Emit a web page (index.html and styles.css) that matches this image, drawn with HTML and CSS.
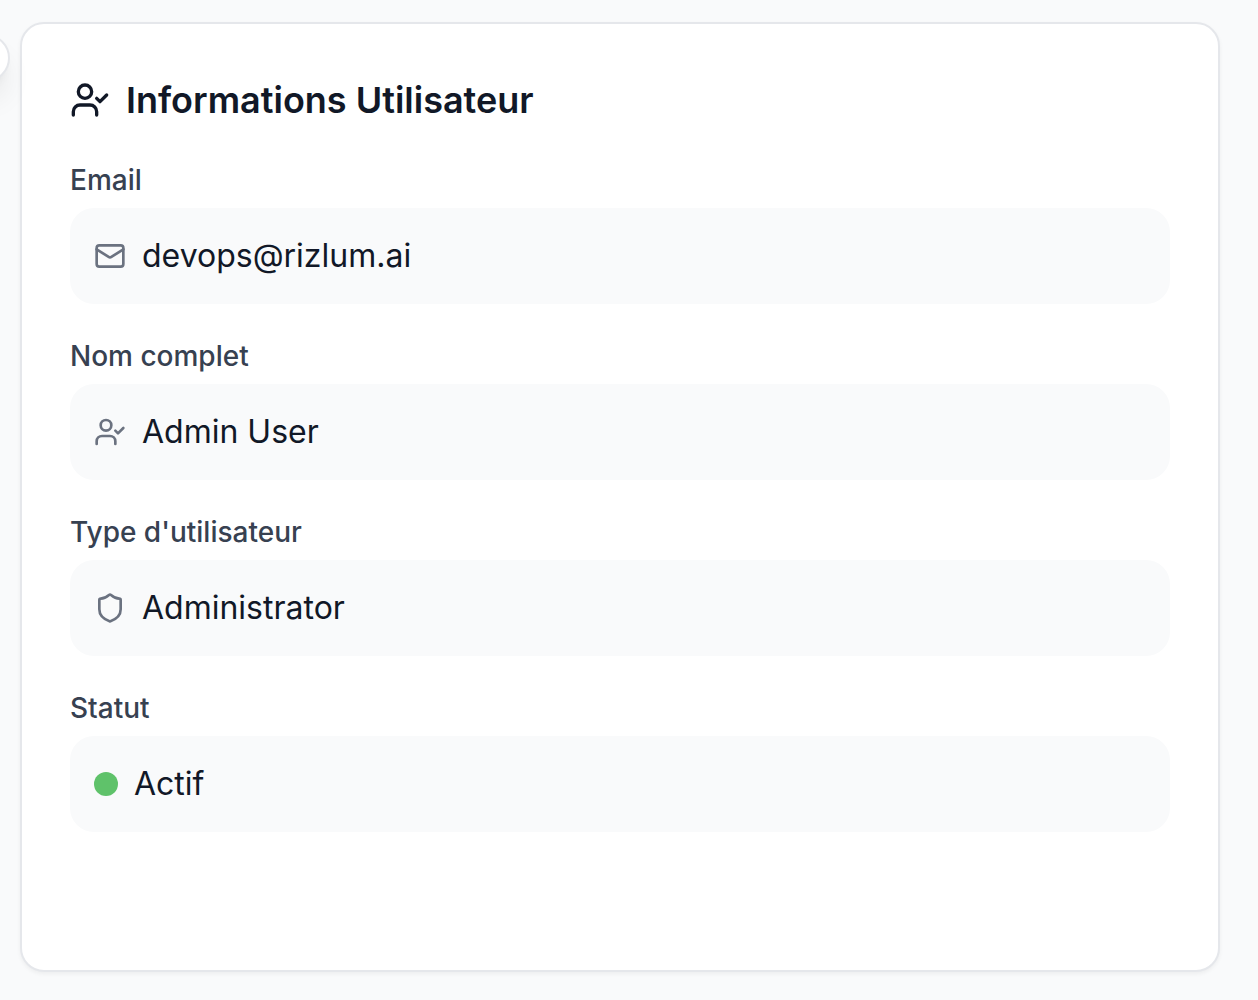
FILE: index.html
```
<!DOCTYPE html>
<html lang="fr">
<head>
    <meta charset="UTF-8">
    <meta name="viewport" content="width=device-width, initial-scale=1.0">
    <title>Informations Utilisateur</title>
    <link rel="stylesheet" href="styles.css">
</head>
<body>
    <button type="button" class="sidebar-toggle" aria-label="Menu"></button>

    <main class="page">
        <section class="card">
            <h2 class="card-title">
                <svg class="icon icon-lg" viewBox="0 0 24 24" aria-hidden="true">
                    <path d="m16 11 2 2 4-4"/>
                    <path d="M16 21v-2a4 4 0 0 0-4-4H6a4 4 0 0 0-4 4v2"/>
                    <circle cx="9" cy="7" r="4"/>
                </svg>
                Informations Utilisateur
            </h2>

            <dl class="fields">
                <div class="field">
                    <dt>Email</dt>
                    <dd>
                        <svg class="icon" viewBox="0 0 24 24" aria-hidden="true">
                            <rect x="2" y="4" width="20" height="16" rx="2"/>
                            <path d="m22 7-8.97 5.7a1.94 1.94 0 0 1-2.06 0L2 7"/>
                        </svg>
                        <span>devops@rizlum.ai</span>
                    </dd>
                </div>
                <div class="field">
                    <dt>Nom complet</dt>
                    <dd>
                        <svg class="icon" viewBox="0 0 24 24" aria-hidden="true">
                            <path d="m16 11 2 2 4-4"/>
                            <path d="M16 21v-2a4 4 0 0 0-4-4H6a4 4 0 0 0-4 4v2"/>
                            <circle cx="9" cy="7" r="4"/>
                        </svg>
                        <span>Admin User</span>
                    </dd>
                </div>
                <div class="field">
                    <dt>Type d'utilisateur</dt>
                    <dd>
                        <svg class="icon" viewBox="0 0 24 24" aria-hidden="true">
                            <path d="M20 13c0 5-3.5 7.5-7.66 8.95a1 1 0 0 1-.67-.01C7.5 20.5 4 18 4 13V6a1 1 0 0 1 1-1c2 0 4.5-1.2 6.24-2.72a1.17 1.17 0 0 1 1.52 0C14.51 3.81 17 5 19 5a1 1 0 0 1 1 1z"/>
                        </svg>
                        <span>Administrator</span>
                    </dd>
                </div>
                <div class="field">
                    <dt>Statut</dt>
                    <dd>
                        <span class="status-dot"></span>
                        <span>Actif</span>
                    </dd>
                </div>
            </dl>
        </section>
    </main>
</body>
</html>
```
FILE: styles.css
```
* {
    box-sizing: border-box;
}
body {
    margin: 0;
    font-family: Inter, sans-serif;
    background: #f9fafb;
    color: #111827;
    overflow-x: hidden;
}
.page {
    display: flex;
    min-height: 100vh;
    padding: 22px 38px 28px 20px;
}
.card {
    flex: 1;
    padding: 48px;
    background: #ffffff;
    border: 2px solid #e5e7eb;
    border-radius: 24px;
    box-shadow: 0 2px 4px rgba(0, 0, 0, 0.05);
}
.card-title {
    display: flex;
    align-items: center;
    gap: 16px;
    margin: 0 0 32px;
    font-size: 36px;
    font-weight: 600;
    line-height: 56px;
}
.fields {
    display: flex;
    flex-direction: column;
    gap: 32px;
    margin: 0;
}
.field dt {
    margin-bottom: 8px;
    font-size: 28px;
    font-weight: 500;
    line-height: 40px;
    color: #374151;
}
.field dd {
    display: flex;
    align-items: center;
    gap: 16px;
    margin: 0;
    padding: 24px;
    font-size: 32px;
    line-height: 48px;
    background: #f9fafb;
    border-radius: 24px;
}
.icon {
    flex: none;
    width: 32px;
    height: 32px;
    fill: none;
    stroke: #6b7280;
    stroke-width: 2;
    stroke-linecap: round;
    stroke-linejoin: round;
}
.icon-lg {
    width: 40px;
    height: 40px;
    stroke: #111827;
}
.status-dot {
    width: 24px;
    height: 24px;
    border-radius: 50%;
    background: #5fc26a;
}
/* round handle that sticks out over the left edge */
.sidebar-toggle {
    position: absolute;
    top: 34px;
    left: -38px;
    width: 48px;
    height: 48px;
    padding: 0;
    background: #ffffff;
    border: 2px solid #e5e7eb;
    border-radius: 50%;
    box-shadow: 0 20px 30px -6px rgba(0, 0, 0, 0.1), 0 8px 12px -8px rgba(0, 0, 0, 0.1);
    cursor: pointer;
}
```
